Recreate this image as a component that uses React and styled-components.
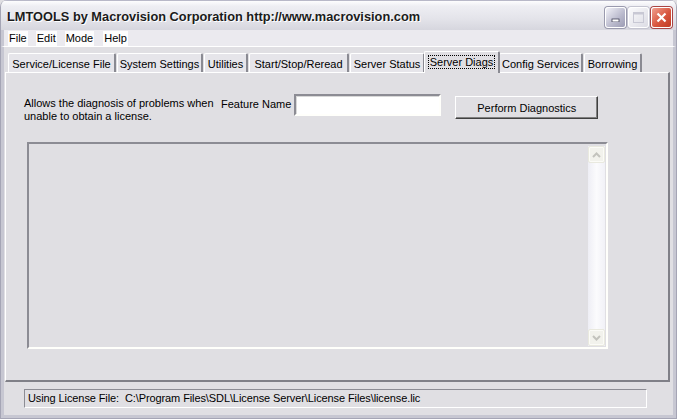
import React from 'react';
import styled, { createGlobalStyle, css } from 'styled-components';

const GlobalStyle = createGlobalStyle`
  html, body {
    margin: 0;
    padding: 0;
    background: #e0dfe3;
  }
  * { box-sizing: border-box; }
`;

const UI_FONT = `"Liberation Sans", Arial, sans-serif`;

// Window frame
const Window = styled.div`
  width: 677px;
  height: 419px;
  display: flex;
  flex-direction: column;
  background: #e0dfe3;
  border: 1px solid #a5a5b5;
  border-top: none;
  border-radius: 7px 7px 0 0;
  overflow: hidden;
  font-family: ${UI_FONT};
  font-size: 11px;
  color: #000;
`;

const TitleBar = styled.div`
  height: 30px;
  flex: none;
  display: flex;
  align-items: center;
  padding: 0 4px 0 6px;
  background: linear-gradient(#fdfdfe 0%, #eeeef3 18%, #e4e4ea 60%, #d6d6de 100%);
  border-top: 1px solid #b8b8c8;
`;

const Title = styled.div`
  flex: 1;
  font-family: ${UI_FONT};
  font-weight: bold;
  font-size: 12.8px;
  color: #1b1b1b;
  text-shadow: 1px 1px 0 #fff;
  margin-top: 2px;
`;

const Controls = styled.div`
  display: flex;
  gap: 2px;
  margin-top: 3px;
`;

const CtlButton = styled.div`
  width: 21px;
  height: 21px;
  border-radius: 3px;
  border: 1px solid #fff;
  box-shadow: 0 0 0 1px #9a9aae;
  display: flex;
  align-items: center;
  justify-content: center;
  ${(p) =>
    p.kind === 'min' &&
    css`
      background: linear-gradient(135deg, #f2f2f8, #b9b9cc 60%, #9c9cb4);
    `}
  ${(p) =>
    p.kind === 'max' &&
    css`
      background: linear-gradient(135deg, #fafafc, #dcdce4);
      box-shadow: 0 0 0 1px #c4c4d0;
    `}
  ${(p) =>
    p.kind === 'close' &&
    css`
      background: linear-gradient(135deg, #f0a090, #d8563f 55%, #c03a22);
      box-shadow: 0 0 0 1px #a44;
    `}
`;

const MenuBar = styled.div`
  height: 17px;
  flex: none;
  display: flex;
  align-items: center;
  padding-left: 4px;
  background: #ebeaef;
  border-left: 3px solid #c7c7d2;
  border-right: 3px solid #c7c7d2;
  border-bottom: 1px solid #fff;
`;

const MenuItem = styled.span`
  background: #fdfdfd;
  padding: 1px 1px;
  margin-right: ${(p) => p.gap}px;
  line-height: 13px;
`;

const Body = styled.div`
  flex: 1;
  display: flex;
  flex-direction: column;
  border-left: 3px solid #c7c7d2;
  border-right: 3px solid #c7c7d2;
  border-bottom: 3px solid #c7c7d2;
  padding: 4px 3px 0 1px;
`;

const TabStrip = styled.div`
  display: flex;
  align-items: flex-end;
  height: 21px;
  padding-left: 3px;
  position: relative;
  z-index: 2;
`;

const Tab = styled.div`
  height: 19px;
  width: ${(p) => p.w}px;
  margin-right: 1px;
  display: flex;
  align-items: center;
  justify-content: center;
  white-space: nowrap;
  background: #e6e5ea;
  border: 1px solid #fff;
  border-right: 2px solid #8a8a92;
  border-bottom: none;
  border-radius: 2px 2px 0 0;
  padding-top: 1px;
  ${(p) =>
    p.active &&
    css`
      height: 22px;
      margin: 0 -1px -1px -2px;
      background: #e0dfe3;
      padding-bottom: 2px;
      position: relative;
      z-index: 3;
    `}
`;

const TabLabel = styled.span`
  ${(p) =>
    p.active &&
    css`
      outline: 1px dotted #000;
      outline-offset: 0;
      padding: 0 1px;
    `}
`;

const TabPanel = styled.div`
  height: 310px;
  flex: none;
  border: 1px solid #fff;
  border-right: 2px solid #808088;
  border-bottom: 2px solid #808088;
  display: flex;
  flex-direction: column;
  padding: 21px 61px 0 18px;
`;

const TopRow = styled.div`
  display: flex;
  align-items: flex-start;
`;

const Description = styled.div`
  width: 197px;
  line-height: 13px;
  margin-top: 3px;
`;

const FieldLabel = styled.div`
  margin-top: 4px;
  margin-right: 3px;
`;

const TextInput = styled.div`
  width: 147px;
  height: 22px;
  background: #fff;
  border: 2px solid;
  border-color: #8c8c94 #fffffb #fffffb #8c8c94;
  box-shadow: inset 1px 1px 0 #d8d8d8;
`;

const PushButton = styled.div`
  width: 143px;
  height: 23px;
  margin-left: 14px;
  margin-top: 2px;
  display: flex;
  align-items: center;
  justify-content: center;
  border: 1px solid;
  border-color: #fff #404040 #404040 #fff;
  box-shadow: inset -1px -1px 0 #808080;
  background: #e0dfe3;
`;

const OutputArea = styled.div`
  margin: 19px 0 0 3px;
  width: 581px;
  height: 207px;
  border: 2px solid;
  border-color: #8c8c94 #fffffb #fffffb #8c8c94;
  background: #e0dfe3;
  display: flex;
  justify-content: flex-end;
  padding: 2px 1px 1px 0;
`;

const ScrollBar = styled.div`
  width: 17px;
  display: flex;
  flex-direction: column;
  justify-content: space-between;
  background: linear-gradient(90deg, #eeeef5, #fbfbfd 50%, #f1f1f7);
`;

const ScrollArrow = styled.div`
  width: 17px;
  height: 17px;
  border: 1px solid #e9e9df;
  border-radius: 2px;
  background: #f2f2ec;
  box-shadow: inset 0 0 0 1px #fbfbf7;
  display: flex;
  align-items: center;
  justify-content: center;
`;

const StatusRow = styled.div`
  padding: 7px 0 0 19px;
`;

const StatusField = styled.div`
  width: 623px;
  height: 19px;
  border: 1px solid;
  border-color: #8c8c94 #fff #fff #8c8c94;
  padding: 2px 0 0 3px;
  white-space: nowrap;
  letter-spacing: -0.1px;
`;

const Chevron = ({ up }) => (
  <svg width="9" height="6" viewBox="0 0 9 6">
    <path
      d={up ? 'M1 5 L4.5 1.5 L8 5' : 'M1 1 L4.5 4.5 L8 1'}
      fill="none"
      stroke="#c3c3bd"
      strokeWidth="2"
    />
  </svg>
);

const tabs = [
  { label: 'Service/License File', w: 108 },
  { label: 'System Settings', w: 86 },
  { label: 'Utilities', w: 44 },
  { label: 'Start/Stop/Reread', w: 100 },
  { label: 'Server Status', w: 75 },
  { label: 'Server Diags', w: 76, active: true },
  { label: 'Config Services', w: 84 },
  { label: 'Borrowing', w: 58 },
];

const menus = [
  { label: 'File', gap: 8 },
  { label: 'Edit', gap: 8 },
  { label: 'Mode', gap: 9 },
  { label: 'Help', gap: 0 },
];

export default function App() {
  return (
    <>
      <GlobalStyle />
      <Window>
        <TitleBar>
          <Title>LMTOOLS by Macrovision Corporation http://www.macrovision.com</Title>
          <Controls>
            <CtlButton kind="min">
              <svg width="9" height="9" viewBox="0 0 9 9">
                <rect x="1" y="6" width="7" height="3" fill="#fff" stroke="#44445a" strokeWidth="0.8" />
              </svg>
            </CtlButton>
            <CtlButton kind="max">
              <svg width="11" height="11" viewBox="0 0 11 11">
                <rect x="0.5" y="0.5" width="10" height="10" fill="none" stroke="#c8c8d4" />
                <rect x="0.5" y="0.5" width="10" height="2" fill="#c8c8d4" />
              </svg>
            </CtlButton>
            <CtlButton kind="close">
              <svg width="11" height="11" viewBox="0 0 11 11">
                <path d="M1.5 1.5 L9.5 9.5 M9.5 1.5 L1.5 9.5" stroke="#fff" strokeWidth="2.2" />
              </svg>
            </CtlButton>
          </Controls>
        </TitleBar>

        <MenuBar>
          {menus.map((m) => (
            <MenuItem key={m.label} gap={m.gap}>
              {m.label}
            </MenuItem>
          ))}
        </MenuBar>

        <Body>
          <TabStrip>
            {tabs.map((t) => (
              <Tab key={t.label} w={t.w} active={t.active}>
                <TabLabel active={t.active}>{t.label}</TabLabel>
              </Tab>
            ))}
          </TabStrip>

          <TabPanel>
            <TopRow>
              <Description>
                Allows the diagnosis of problems when unable to obtain a license.
              </Description>
              <FieldLabel>Feature Name</FieldLabel>
              <TextInput />
              <PushButton>Perform Diagnostics</PushButton>
            </TopRow>
            <OutputArea>
              <ScrollBar>
                <ScrollArrow>
                  <Chevron up />
                </ScrollArrow>
                <ScrollArrow>
                  <Chevron />
                </ScrollArrow>
              </ScrollBar>
            </OutputArea>
          </TabPanel>

          <StatusRow>
            <StatusField>
              Using License File:&nbsp;&nbsp;C:\Program Files\SDL\License Server\License Files\license.lic
            </StatusField>
          </StatusRow>
        </Body>
      </Window>
    </>
  );
}
